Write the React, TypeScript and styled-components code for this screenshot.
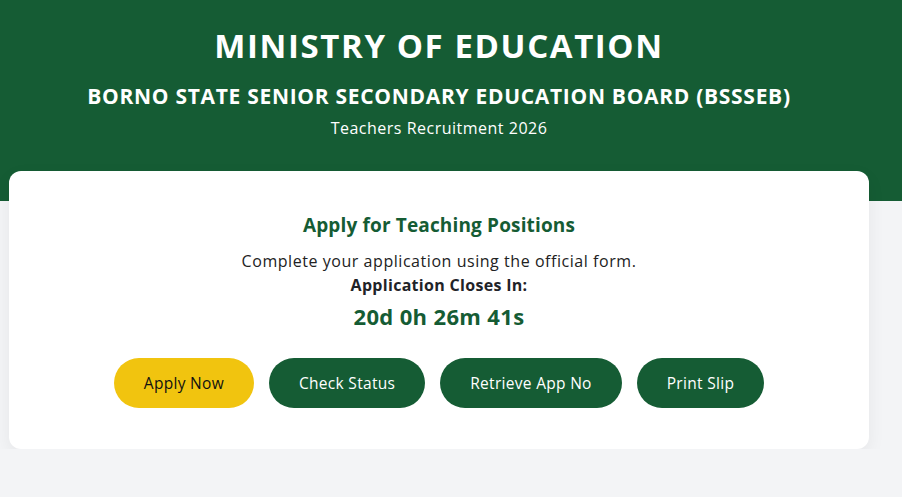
import React from 'react';
import styled, { createGlobalStyle } from 'styled-components';

const GlobalStyle = createGlobalStyle`
  * { box-sizing: border-box; }
  body {
    margin: 0;
    background: #f3f4f6;
    font-family: 'Open Sans', 'Noto Sans', sans-serif;
  }
`;

const Header = styled.header`
  background: #155c34;
  color: #ffffff;
  text-align: center;
  padding: 24px 24px 0 0;
  height: 201px;
`;

const Title = styled.h1`
  margin: 0;
  font-size: 33px;
  font-weight: 700;
  letter-spacing: 1.6px;
  line-height: 44px;
`;

const Subtitle = styled.h2`
  margin: 14px 0 0;
  font-size: 21px;
  font-weight: 700;
  letter-spacing: 0.7px;
  line-height: 28px;
`;

const Tagline = styled.p`
  margin: 7px 0 0;
  font-size: 16px;
  letter-spacing: 0.5px;
  line-height: 22px;
`;

const Card = styled.main`
  background: #ffffff;
  margin: -30px 33px 0 9px;
  border-radius: 12px;
  box-shadow: 0 6px 18px rgba(0, 0, 0, 0.06);
  padding: 40px 20px 40px;
  text-align: center;
  height: 278px;
`;

const CardTitle = styled.h3`
  margin: 0;
  color: #155c34;
  font-size: 19px;
  font-weight: 700;
  letter-spacing: 0.15px;
  line-height: 28px;
`;

const Lead = styled.p`
  margin: 10px 0 0;
  color: #222222;
  font-size: 16px;
  letter-spacing: 0.55px;
  line-height: 24px;
`;

const Label = styled.p`
  margin: 0;
  color: #1f2328;
  font-size: 16px;
  font-weight: 700;
  letter-spacing: 0.3px;
  line-height: 24px;
`;

const Countdown = styled.div`
  margin-top: 3px;
  color: #155c34;
  font-size: 22px;
  font-weight: 700;
  letter-spacing: 0.35px;
  line-height: 32px;
`;

const Actions = styled.div`
  margin-top: 26px;
  display: flex;
  justify-content: center;
  gap: 15px;
`;

const Button = styled.button<{ $primary?: boolean }>`
  height: 50px;
  padding: 0 30px;
  border: none;
  border-radius: 25px;
  font-family: inherit;
  font-size: 15.5px;
  letter-spacing: 0.3px;
  cursor: pointer;
  background: ${({ $primary }) => ($primary ? '#f1c40f' : '#155c34')};
  color: ${({ $primary }) => ($primary ? '#111111' : '#ffffff')};
`;

const actions = ['Check Status', 'Retrieve App No', 'Print Slip'];

export default function App() {
  return (
    <>
      <GlobalStyle />
      <Header>
        <Title>MINISTRY OF EDUCATION</Title>
        <Subtitle>BORNO STATE SENIOR SECONDARY EDUCATION BOARD (BSSSEB)</Subtitle>
        <Tagline>Teachers Recruitment 2026</Tagline>
      </Header>
      <Card>
        <CardTitle>Apply for Teaching Positions</CardTitle>
        <Lead>Complete your application using the official form.</Lead>
        <Label>Application Closes In:</Label>
        <Countdown>20d 0h 26m 41s</Countdown>
        <Actions>
          <Button $primary>Apply Now</Button>
          {actions.map(a => (
            <Button key={a}>{a}</Button>
          ))}
        </Actions>
      </Card>
    </>
  );
}
